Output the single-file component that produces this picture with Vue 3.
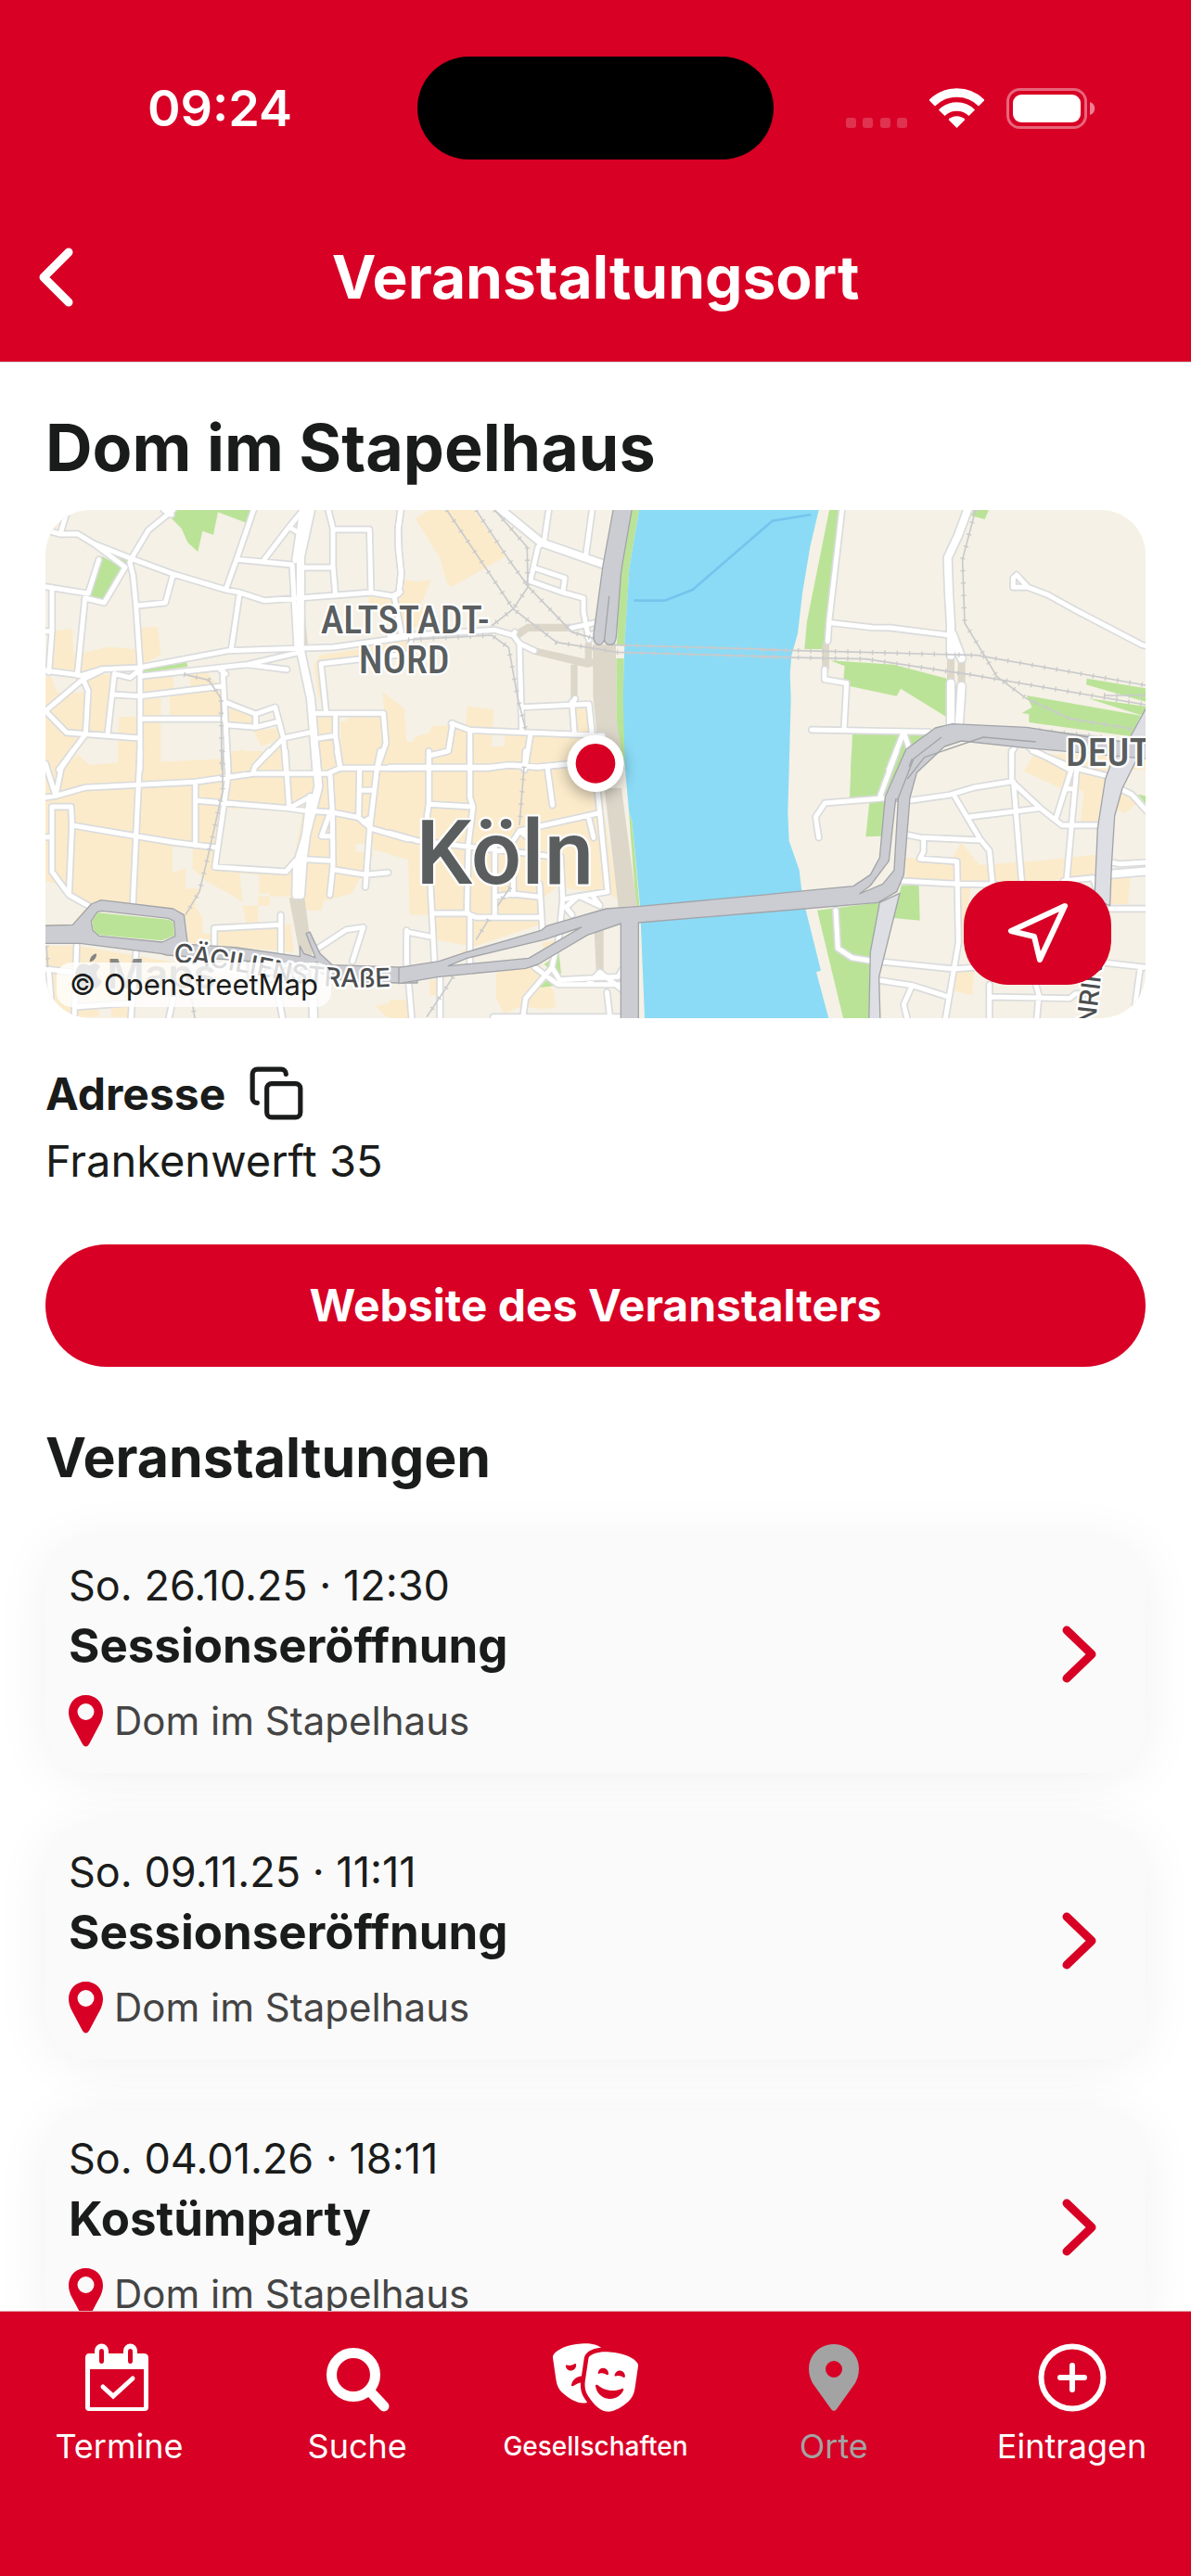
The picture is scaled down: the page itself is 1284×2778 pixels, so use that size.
<script setup>
import { ref } from 'vue'

const events = ref([
  { id: 1, date: 'So. 26.10.25 · 12:30', title: 'Sessionseröffnung', place: 'Dom im Stapelhaus' },
  { id: 2, date: 'So. 09.11.25 · 11:11', title: 'Sessionseröffnung', place: 'Dom im Stapelhaus' },
  { id: 3, date: 'So. 04.01.26 · 18:11', title: 'Kostümparty', place: 'Dom im Stapelhaus' },
])

// --- MAP DATA: six tiles, each with its own origin ---
const tiles = [
  {
    id: 'nw',
    origin: 'translate(-27 -30)',
    blocks:
      'M60 420 113 414 118 496 160 490 230 473 315 480 333 470 338 410 390 408 400 500 335 530 145 570 60 555 45 545z M45 570 60 620 155 620 150 570 245 560 235 755 150 750 75 870 27 870 27 690z M27 570H45L75 650 27 680z M265 700 400 695 400 870 260 870z M345 570 440 570 443 610 345 620z M345 640H400V700H345z M428 625 590 600 600 700 430 695z M495 560 550 555 585 600 495 610z M620 665 705 690 700 725 620 715z M700 745 780 735 790 770 725 795z M400 845 600 835 660 805 710 830 790 770 800 870 400 870z M125 825 170 855 260 850 260 870 80 870z M905 700H965V770L960 860 915 870z M980 715 1003 712V700H1110L1130 790 1100 860 985 860z M1118 618 1187 672 1195 780 1200 870 1110 870 1130 790z M895 530 915 500 1040 480 1200 450V490L915 525 930 680 910 630z M1072 310H1200V400H1165L1150 360 1075 345z M27 60 75 50 60 95 40 90z',
    greens:
      'M428 50 455 30H690L678 72 585 37 570 110 535 98 520 165 487 135 467 90z M210 180 275 215 215 320 170 308z M345 545 483 520 487 537 345 555z M240 175 290 190 285 208z',
    tan: 'M838 200H852V470H840z M862 330 876 470H862z',
    roads:
      'M27 95 75 108 130 107 185 140 285 215 217 330 155 315M185 140 305 187 440 237 610 288 655 297 735 323 965 306 1080 297 1150 308 1175 295M98 30 75 108M200 190 165 300 27 278M440 30 360 95 305 187 300 200 310 240 320 340 333 530 333 870M410 30 435 45M440 237 415 330 320 340M700 30 645 190 610 288M655 297 628 480M645 190 825 207M735 190 815 85 860 30M815 85 840 100M825 207 840 480M942 30 957 90 957 210 965 306M957 93H1075L1080 297M860 216H957M1175 30 1168 90 1168 150 1177 235 1170 300M48 280 48 420 38 555M27 422H48M155 315 130 565M27 550 145 565 210 545 330 540 620 485 840 478 960 474 1200 440M27 680 145 580 210 548M27 680 95 750 330 768M150 580 165 615 157 755 70 870M250 560 228 755M250 560 300 572 335 545M333 568 680 530 850 490M680 530 808 546M245 627 333 632 600 600M333 706H605M600 540 605 640 618 870M585 540 610 560M612 653 707 690 770 668 797 770 805 870M707 690V730M612 725 707 733 778 715M880 750 797 768 705 860M1200 495 918 527 935 688 1120 688 1128 785 1100 865M905 688H935M965 688 965 760 980 860M912 768 965 760',
    wideRoads: 'M885 30 852 180 851 480 885 640 905 880M862 30 838 190',
    rails: 'M475 562 555 580 595 640 597 870',
  },
  {
    id: 'sw',
    origin: 'translate(-27 780)',
    blocks:
      'M27 60H100L130 10 170 45 260 38V60H400V35H600V0H790L805 60H905V0H1200V345L1090 320 1085 300H1030V325L1090 330 1040 420 1020 460 925 485 920 515 870 515 820 520V470H718V400L655 395 665 490 620 460 545 420 503 380V310H438V392L480 380V445H525L510 500 535 540V590H570V560L675 555 665 500 752 500V460H715V560H820L830 650 490 620 480 540 430 510 200 485 110 560 27 565V450L60 430 27 420z M27 630H130L310 660 480 690 500 740 470 790 320 800 300 860 240 860V820H200V860H27z M1095 825 1180 805H1200V860H1130z',
    land: 'M610 185 860 195 830 350 800 390 580 370z M27 455 60 425 103 465 165 500 110 560 27 560z M805 0H880V60L810 65z',
    greens: '',
    tan: 'M815 475H865L890 660 850 660z',
    roads:
      'M27 150 60 145 155 118 510 100 700 73H940L980 55H1200M27 40 60 145 78 55 115 0M333 0 310 490M103 465 48 390V180H110L113 240 103 465 165 500M27 278H48M113 240 320 275 440 295 580 312M512 105V305M512 160 815 185M612 0 618 80 575 375 805 390 835 355M750 0 705 50 697 73M803 0 815 185 880 150M815 185 860 192 955 198 1040 215 1080 250 1200 285M970 0 980 55M1110 0 1100 50 1075 260 1062 440M1043 60 1040 215M1045 127H1090M1055 230 1080 215M948 80 955 200 957 370 947 465M945 205 920 275H955M865 350 955 355M957 383 1062 400 1135 393M573 640V573L788 562M788 530V660M905 640 1000 578 1055 570 1020 680M27 705 110 715M37 705 50 870M128 630 120 870M320 650 303 870M120 828 303 815M1195 580V700M440 800 425 870M780 790 795 870',
    wideRoads: 'M900 0 910 115 865 290 840 370 838 465M885 150 860 350 852 465M892 800 894 870',
    rails: 'M600 0 600 130 555 330 525 455 480 530M30 630 35 700M500 800 510 864',
  },
  {
    id: 'n',
    origin: 'translate(1113 -30)',
    blocks:
      'M83 58 130 30H272L375 180 200 280 185 265 163 185z M48 255 90 262 135 255 100 340 150 375 20 440z M0 640 48 680 52 780 75 780 80 765 130 750 135 730 205 725 245 735 252 665 337 675 330 795 370 795 375 750 600 765 700 780V870H0z M605 670 640 675 650 750 605 750z',
    greens: 'M780 30H807L775 220 760 465H735L745 240z M733 510H758V640L765 870 740 780 733 710z',
    tan: 'M658 465H732V700L760 870H690L670 750 658 630z M398 445 400 425 445 398H590V423H450L420 445z M470 475 640 513 658 510V535L640 540 465 497z M586 530H608V650H586z M632 460H654V520H632z',
    roads:
      'M37 30 28 90 30 160 38 235 30 300 15 310 40 440M0 440 340 418 400 435 405 425M400 435 420 462 468 485M70 435 65 480M515 30 500 130 480 150 455 260 560 297 567 250 470 218M560 297 627 315 627 360 645 450M655 30 635 175M585 412 665 395M640 440 660 430M420 460 428 750M0 862H320L400 855 480 862 600 850M428 668 645 658 655 755M590 650 598 755M600 640 590 660M200 720 260 742 690 760M205 720 190 810 127 825V870M260 742V870M455 760 437 870',
    wideRoads: 'M350 20 490 135 690 205',
    rails:
      'M185 30 400 350 540 458 735 490 1260 505M280 30 385 190 450 280 590 425 735 467 1260 482M340 30 445 150 447 280 400 350 330 405M60 450 330 435 385 475 415 640 440 740',
  },
  {
    id: 's',
    origin: 'translate(1113 780)',
    blocks:
      'M0 0H660L740 480 725 470 700 455 555 470 540 340V440L550 470 480 480 490 560 250 640 140 650 130 530H65L60 350 0 335z M345 700 490 690 500 740 530 775 537 830 490 835 430 825 370 850 345 800z M155 640 250 600V650L160 675z M495 620 550 610 540 655 500 680z M0 805H60V864H0z M130 740H160V790H130z',
    land: 'M150 610 255 630 190 690 145 670z M540 440 700 460 735 480 740 520 500 560 490 480z',
    greens:
      'M760 0 775 200 785 230 808 500H797L780 280z M500 690 548 655 555 720 535 720z M485 765 510 740 530 760z',
    tan: 'M695 120H750L800 500 740 505z M662 580H692V710H668z',
    roads:
      'M0 55H320L380 45 475 52 600 40M127 0V170L120 220M260 0V150L270 180 255 300 250 520 260 530V690M127 172 270 180M440 0 437 40M510 50 527 175M0 265 90 290 260 310 440 330 550 345M400 290 420 258 680 200M420 258 460 290M672 120 705 455 610 470 560 480M643 210 660 280M553 340 560 480 548 600 525 700 440 800 430 870M132 430 145 680M340 310V530M345 470 400 462 485 472M400 400V465M485 430 495 590M140 525H250L280 538H490M130 600 55 585V690M610 470 570 505 590 530M655 465 680 500M615 470 680 500M62 750 72 870M163 730V870M470 700 545 755H750M525 700 550 740 740 730 750 710M640 755 680 715 750 770M703 780 712 855M335 860H745',
    wideRoads: '',
    rails: 'M435 50 420 240M390 440 350 500M320 545 280 610M205 730 180 770 120 860',
  },
  {
    id: 'ne',
    origin: 'translate(2313 -30)',
    blocks: 'M885 820H1245V870H855z',
    greens:
      'M222 30H250L225 380 203 480H142L150 390z M225 517 430 530 602 575V700L453 608 440 632 288 600 268 580 272 535z M628 600H640V700H628z M297 755H540L440 870H292z M690 30H738L725 60 680 48z M1055 575 1245 607V650L1053 595z M1060 640 1245 665V692L1225 692z M860 630 1230 695 1195 762 868 717V690L845 687 878 668z',
    tan: 'M200 460H222V545H198z M603 510H627V585H603z M638 515H662V600H638z',
    roads:
      'M263 30 222 385 217 455M230 395 360 410 420 411 610 435M207 545V578L278 590 270 738M165 741 545 748M460 755 415 870M465 755 480 800M1250 470 1235 467 1020 355 930 305 865 280H817V250L828 240 865 280M812 870V815L820 800M870 800 1000 870',
    wideRoads: 'M673 20 640 110 605 185 609 300 615 400 615 500M620 430 650 510M615 590V720M650 600 642 720',
    rails:
      'M0 482 250 488 700 500 1245 597M0 505 340 512 680 563 1245 660M695 30 653 190 660 395 765 570 860 640 1000 705 1200 738M1110 630H1245M900 742 1150 770',
  },
  {
    id: 'se',
    origin: 'translate(2313 780)',
    blocks:
      'M885 10 1000 60 970 120 852 65z M1000 10 1120 60 1090 230H1035L1045 130 970 120z M1170 130 1215 170 1180 200 1150 190z M470 345 620 350 648 295 708 368 900 355 1085 335 1080 400 980 415 740 425 470 415z M1135 410H1195L1188 495H1130z M635 715 690 710 685 790 622 775z M640 430H680L660 620 640 640z',
    greens:
      'M294 0H470L400 148 288 152z M352 165 403 165 392 275 340 277z M183 515 385 490 355 650V864H267z M455 435 512 432 515 548 430 540z M1220 140 1245 145V170z',
    tan: '',
    roads:
      'M440 0 385 150M403 152 208 168 178 213 188 280M483 160 610 142 690 118 812 98V0M625 142 710 285 740 322 750 430M470 270 520 280 710 288M527 282 527 325 515 348 635 357 640 620 597 870M455 420 640 430 760 432M675 213 900 185M812 98 905 185 975 240H1090M818 100 845 430M1005 60 955 218M1022 60 990 415M990 122H1015M880 0 1000 50 1120 80M980 420 1075 410 1085 440M1170 125 1200 140 1250 195M1135 360 1160 365 1250 360M1130 510H1250M243 515 250 638 295 668 355 678M397 682 625 705 690 700M385 742 490 758 600 793M490 758 463 820 475 870M740 755V870M745 795 1000 800 1018 785H1045M890 755 900 790 893 870M1115 685 1250 700M1228 700 1210 830',
    wideRoads: 'M1130 398 1250 388',
    rails: '',
  },
]
</script>

<template>
  <div class="screen">
    <header class="top">
      <div class="status-bar">
        <time class="clock">09:24</time>
        <div class="island"></div>
        <div class="status-icons">
          <svg width="66" height="44" viewBox="0 0 66 44" fill="#fff" fill-opacity="0.2">
            <rect x="0" y="32" width="11" height="11" rx="3" />
            <rect x="18" y="32" width="11" height="11" rx="3" />
            <rect x="37" y="32" width="11" height="11" rx="3" />
            <rect x="55" y="32" width="11" height="11" rx="3" />
          </svg>
          <svg width="59" height="44" viewBox="0 0 176 132" fill="none" stroke="#fff" stroke-width="28">
            <path d="M7.400 48.400a114 114 0 0 1 161.200 0M39.200 80.200a69 69 0 0 1 97.600 0" />
            <path d="M88 129 61.100 102.100a38 38 0 0 1 53.800 0z" fill="#fff" stroke="none" />
          </svg>
          <svg width="96" height="44" viewBox="0 0 96 44">
            <rect x="1.500" y="1.500" width="84" height="41" rx="13" fill="none" stroke="#fff" stroke-opacity="0.4" stroke-width="3" />
            <rect x="7" y="7" width="73" height="30" rx="9" fill="#fff" />
            <path d="M90 15c7 2 7 12 0 14z" fill="#fff" fill-opacity="0.5" />
          </svg>
        </div>
      </div>
      <div class="title-bar">
        <button class="back" type="button" aria-label="Zurück">
          <svg width="38" height="64" viewBox="0 0 38 64">
            <path d="M33 5 6 32l27 27" />
          </svg>
        </button>
        <span class="page-title">Veranstaltungsort</span>
      </div>
    </header>

    <main class="content">
      <h1>Dom im Stapelhaus</h1>

      <div class="map">
        <svg class="map-canvas" viewBox="0 0 3558 1644">
          <rect width="3558" height="1644" fill="#f5f1e6" />
          <g v-for="t in tiles" :key="'area-' + t.id" :transform="t.origin">
            <path :d="t.blocks" fill="#fbebcb" />
            <path v-if="t.land" :d="t.land" fill="#f5f1e6" />
            <path :d="t.greens" fill="#bae398" />
            <path :d="t.tan" fill="#ddd7ca" />
          </g>

          <!-- Rhein -->
          <g transform="translate(1113 780)">
            <path
              fill="#8bdbf6"
              d="M807-780 775-590 760-345 755-170 762 60 775 200 785 230 810 500 825 864H1420L1380 715 1395 710 1335 470 1325 385 1292 290 1288 200 1292 60 1298-170 1295-250 1300-310 1320-380 1335-510 1360-660 1388-780z"
            />
            <path
              class="ferry"
              d="M790-487H890L980-522 1238-745 1363-765"
            />
          </g>

          <g v-for="t in tiles" :key="'case-' + t.id" :transform="t.origin" class="casing">
            <path :d="t.roads" />
            <path :d="t.wideRoads" class="wide" />
          </g>
          <g v-for="t in tiles" :key="'road-' + t.id" :transform="t.origin" class="road">
            <path :d="t.roads" />
            <path :d="t.wideRoads" class="wide" />
          </g>
          <g v-for="t in tiles" :key="'rail-' + t.id" :transform="t.origin" class="rail">
            <path :d="t.rails" />
            <path :d="t.rails" class="ties" />
          </g>

          <!-- Bundesstraßen -->
          <g class="highway">
            <path
              transform="translate(2313 780)"
              class="light"
              d="M1250-145 1195-45 1130 50 1115 90 1090 250 1080 480 1130 500 1135 370 1145 210 1170 120 1220 20 1250-30z M385 490 355 650 350 880H387L383 730 450 460z"
            />
            <path
              transform="translate(-27 780)"
              d="M20 565 115 562 175 495 207 482 440 510 475 530 487 625 640 635 850 665 850 630 862 655 900 668 870 590 882 585 915 655 955 692 1200 700 1230 698V750H1170L1000 745 830 690 420 660 400 655 140 622 20 622z M175 550 195 520 210 517 425 541 443 550 447 598 405 618 200 598 180 580z"
            />
            <path
              transform="translate(1113 780)"
              d="M30 700 160 680 250 650 490 580 510 565 700 510 810 502 1200 466 1380 448 1500 437 1555 400 1585 345 1603 148 1670-5 1765-75 1820-88 2060-77 2265-45 2450-20V25L2200 2 2060-10 1850-33 1795-15 1705 70 1683 150 1663 400 1640 455 1580 490 1200 522 805 555V880H748V558L640 595 480 690 440 703 160 730 30 752z M190 695 250 670 500 610 620 570 450 670z M1520 462 1555 435 1615 355 1637 155 1645 155 1632 385 1595 430z"
            />
            <path
              transform="translate(2313 -30)"
              class="edge"
              d="M440 975 495 835 585 765M475 900 530 830 720 765 890 780M490 835 480 860"
            />
            <path
              transform="translate(1113 -30)"
              d="M725 20H785L752 210 748 240 733 440Q731 466 713 466 697 466 695 448 690 466 676 466 658 464 660 430L690 210z M710 310 695 448z"
            />
          </g>
          <path transform="translate(-27 780)" fill="#bae398" d="M178 550 197 523 425 545 440 553 444 596 403 613 200 595 182 578z" />

          <g class="map-text">
            <text x="1163" y="400" font-size="126" text-anchor="middle">ALTSTADT-</text>
            <text x="1160" y="528" font-size="126" text-anchor="middle">NORD</text>
            <text class="city" x="1198" y="1210" font-size="288">Köln</text>
            <text x="3300" y="827" font-size="126">DEUTZ</text>
          </g>
          <g class="street-text">
            <path id="caecilien" d="M412 1460Q600 1486 760 1520T1160 1540" fill="none" stroke="none" />
            <text><textPath href="#caecilien">CÄCILIENSTRAßE</textPath></text>
            <text transform="translate(3394 1672) rotate(-83)">NRING</text>
          </g>

          <g transform="translate(-27 780)" fill="#777a7a" fill-opacity="0.9">
            <path
              d="M170 682C170 668 180 657 192 655 193 670 184 680 170 682zM204 700C187 710 189 736 210 744 204 757 197 767 188 767 180 767 178 763 168 763 158 763 155 767 148 767 135 767 124 742 124 722 124 700 137 688 150 688 158 688 164 693 169 693 174 693 180 687 190 687 196 688 201 692 204 700z"
            />
            <text x="226" y="767" font-size="132" font-weight="600">Maps</text>
            <text x="668" y="752" font-size="96" font-weight="500" fill-opacity="0.4">Legal</text>
          </g>

          <g class="marker">
            <circle cx="1779" cy="820" r="92" fill="#fff" />
            <circle cx="1779" cy="820" r="64" fill="#d80025" />
          </g>
        </svg>

        <a class="attribution" href="#osm">© OpenStreetMap</a>
        <button class="navigate" type="button" aria-label="Route starten">
          <svg width="66" height="66" viewBox="0 0 66 66">
            <path d="M62 4 4 31l25 6 6 25z" />
          </svg>
        </button>
      </div>

      <section>
        <div class="address-head">
          <h3>Adresse</h3>
          <button class="copy" type="button" aria-label="Adresse kopieren">
            <svg width="62" height="62" viewBox="0 0 24 24">
              <rect x="8" y="8" width="14" height="14" rx="2" />
              <path d="M4 16c-1.100 0-2-.9-2-2V4c0-1.100.9-2 2-2h10c1.100 0 2 .9 2 2" />
            </svg>
          </button>
        </div>
        <p class="address">Frankenwerft 35</p>
        <a class="website" href="#website">Website des Veranstalters</a>
      </section>

      <section>
        <h2>Veranstaltungen</h2>
        <div class="event-list">
          <a v-for="event in events" :key="event.id" class="event-card" href="#event">
            <div>
              <p class="event-date">{{ event.date }}</p>
              <h3 class="event-title">{{ event.title }}</h3>
              <p class="event-place">
                <svg width="37" height="56" viewBox="0 0 37 56">
                  <path
                    fill="#d80025"
                    fill-rule="evenodd"
                    d="M18.500 0C8 0 0 8 0 18.500c0 4 1 7 2.500 11L15 53q3.500 5 7 0l12.500-23.500C36 25.500 37 22.500 37 18.500 37 8 29 0 18.500 0zm0 9a9 9 0 1 1 0 18 9 9 0 0 1 0-18z"
                  />
                </svg>
                <span>{{ event.place }}</span>
              </p>
            </div>
            <svg class="event-arrow" width="37" height="62" viewBox="0 0 37 62">
              <path d="M5 5 32 31 5 57" />
            </svg>
          </a>
        </div>
      </section>
    </main>

    <nav class="tabs">
      <a class="tab" href="#termine">
        <svg width="74" height="74" viewBox="0 0 74 74">
          <path
            fill="#fff"
            fill-rule="evenodd"
            d="M5 11h6V8a7.500 7.500 0 0 1 15 0v3h16V8a7.500 7.500 0 0 1 15 0v3h7q5 0 5 5v53q0 4-4 4H5q-4 0-4-4V16q0-5 4-5zM6 28v41h58V28zM18.500 6Q16 6 16 9v10q0 3 2.500 3t2.500-3V9q0-3-2.500-3zm31 0Q47 6 47 9v10q0 3 2.500 3t2.500-3V9q0-3-2.500-3z"
          />
          <path d="m20 47 11 10 21-19" fill="none" stroke="#fff" stroke-width="5" stroke-linecap="round" />
        </svg>
        <span>Termine</span>
      </a>
      <a class="tab" href="#suche">
        <svg width="74" height="74" viewBox="0 0 74 74" fill="none" stroke="#fff">
          <circle cx="33" cy="34" r="23.500" stroke-width="11" />
          <path d="m51 52 15 16" stroke-width="11" stroke-linecap="round" />
        </svg>
        <span>Suche</span>
      </a>
      <a class="tab" href="#gesellschaften">
        <svg width="92" height="74" viewBox="0 0 640 512" fill="#fff">
          <path
            d="M74.600 373.200c41.700 36.100 108 82.500 166.100 73.700c6.100-.9 12.100-2.500 18-4.500c-9.200-12.300-17.300-24.400-24.200-35.400c-21.900-35-28.800-75.200-25.900-113.600c-20.600 4.100-39.200 13-54.700 25.400c-6.500 5.200-16.300 1.300-14.800-7c6.400-33.500 33-60.900 68.200-66.300c2.600-.4 5.300-.7 7.900-.8l19.400-131.300c2-13.800 8-32.700 25-45.900C278.200 53.200 310.500 37 363.200 32.200c-.8-.7-1.600-1.400-2.400-2.100C340.600 14.500 288.400-11.500 175.700 5.600S20.500 63 5.700 83.900C0 91.900-.8 102 .6 111.800L24.800 276.100c5.500 37.300 21.500 72.600 49.800 97.200zm87.700-219.600c4.400-3.100 10.800-2 11.800 3.300c.1 .5 .2 1.100 .3 1.600c3.200 21.800-11.600 42-33.100 45.300s-41.500-11.800-44.700-33.500c-.1-.5-.1-1.100-.2-1.600c-.6-5.400 5.200-8.400 10.300-6.700c9 3 18.800 3.900 28.700 2.400s19.100-5.300 26.800-10.800zM261.600 390c29.400 46.900 79.500 110.900 137.600 119.700s124.500-37.500 166.100-73.700c28.300-24.500 44.300-59.800 49.800-97.200l24.200-164.300c1.400-9.800 .6-19.900-5.100-27.900c-14.800-20.900-57.300-61.200-170-78.300S299.400 77.200 279.200 92.800c-7.800 6-11.500 15.400-12.900 25.200L242.100 282.300c-5.500 37.300-.4 75.800 19.600 107.700zM404.500 235.300c-7.700-5.500-16.800-9.300-26.800-10.800s-19.800-.6-28.700 2.400c-5.100 1.700-10.900-1.300-10.300-6.700c.1-.5 .1-1.100 .2-1.600c3.200-21.800 23.200-36.800 44.700-33.500s36.300 23.500 33.100 45.300c-.1 .5-.2 1.100-.3 1.600c-1 5.300-7.400 6.400-11.800 3.300zm136.200 15.500c-1 5.300-7.400 6.400-11.800 3.300c-7.700-5.500-16.800-9.300-26.800-10.800s-19.800-.6-28.700 2.400c-5.100 1.700-10.900-1.300-10.300-6.700c.1-.5 .1-1.100 .2-1.600c3.200-21.800 23.200-36.800 44.700-33.500s36.300 23.500 33.100 45.300c-.1 .5-.2 1.100-.3 1.600zM530 350.200c-19.600 44.700-66.800 72.500-116.800 64.900s-87.100-48.200-93-96.700c-1-8.300 8.900-12.100 15.200-6.700c23.900 20.800 53.600 35.300 87 40.300s66.100 .1 94.900-12.800c7.600-3.400 16 3.200 12.600 10.900z"
          />
        </svg>
        <span class="small">Gesellschaften</span>
      </a>
      <a class="tab active" href="#orte" aria-current="page">
        <svg width="74" height="74" viewBox="0 0 74 74">
          <path
            fill="#a3a3a3"
            fill-rule="evenodd"
            d="M37 1C22 1 10 12.500 10 27.500 10 34 12 39 14 43L34 71q3 4 6 0l20-28c2-4 4-9 4-15.500C64 12.500 52 1 37 1zm0 18a9 9 0 1 1 0 18 9 9 0 0 1 0-18z"
          />
        </svg>
        <span>Orte</span>
      </a>
      <a class="tab" href="#eintragen">
        <svg width="74" height="74" viewBox="0 0 74 74" fill="none" stroke="#fff" stroke-width="6">
          <circle cx="37" cy="37" r="33.500" />
          <path d="M37 24v26M24 37h26" stroke-linecap="round" />
        </svg>
        <span>Eintragen</span>
      </a>
    </nav>
  </div>
</template>

<style>
body {
  margin: 0;
  background: #fff;
}
</style>

<style scoped>
.screen {
  display: flex;
  flex-direction: column;
  height: 100vh;
  overflow: hidden;
  font-family: Inter, 'Liberation Sans', sans-serif;
  color: #1a1c1b;
}

h1,
h2,
h3,
p {
  margin: 0;
}

a {
  color: inherit;
  text-decoration: none;
}

button {
  padding: 0;
  border: none;
  background: none;
  cursor: pointer;
}

svg {
  display: block;
  flex: none;
}

/* --- HEADER --- */
.top {
  background: #d80025;
  color: #fff;
  border-bottom: 1px solid #d5d9dd;
}

.status-bar {
  display: grid;
  grid-template-columns: 1fr 384px 1fr;
  align-items: center;
  padding: 61px 0 35px;
}

.clock {
  justify-self: center;
  padding-left: 24px;
  font-size: 54px;
  font-weight: 600;
}

.island {
  height: 111px;
  border-radius: 56px;
  background: #000;
}

.status-icons {
  display: flex;
  gap: 24px;
  padding-left: 78px;
}

.title-bar {
  display: grid;
  grid-template-columns: 120px 1fr 120px;
  align-items: center;
  height: 183px;
}

.back {
  padding-left: 41px;
}

.back path,
.event-arrow path {
  fill: none;
  stroke: #fff;
  stroke-width: 9;
  stroke-linecap: round;
  stroke-linejoin: round;
}

.page-title {
  text-align: center;
  font-size: 64px;
  font-weight: 700;
}

/* --- CONTENT --- */
.content {
  flex: 1;
  min-height: 0;
  overflow-y: auto;
  scrollbar-width: none;
  padding: 47px 49px 0;
}

h1 {
  margin-bottom: 22px;
  font-size: 70px;
  line-height: 90px;
  font-weight: 700;
}

.map {
  position: relative;
  overflow: hidden;
  border-radius: 48px;
}

.map-canvas {
  width: 100%;
  height: auto;
}

.ferry {
  fill: none;
  stroke: #74c4ee;
  stroke-width: 8;
}

.casing path,
.road path {
  fill: none;
  stroke-linecap: round;
  stroke-linejoin: round;
}

.casing path {
  stroke: #dadbdc;
  stroke-width: 25;
}

.casing .wide {
  stroke-width: 34;
}

.road path {
  stroke: #fff;
  stroke-width: 15;
}

.road .wide {
  stroke-width: 24;
}

.rail path {
  fill: none;
  stroke: #c9cacb;
  stroke-width: 5;
}

.rail .ties {
  stroke-width: 16;
  stroke-dasharray: 4 36;
}

.highway path {
  fill: #cccdd2;
  fill-rule: evenodd;
  stroke: #a2a4a8;
  stroke-width: 4;
  stroke-linejoin: round;
}

.highway .light {
  fill: #dedfe4;
}

.highway .edge {
  fill: none;
}

.map-text text {
  font-family: 'Roboto Condensed', 'Liberation Sans Narrow', Roboto, sans-serif;
  font-weight: 500;
  fill: #5a5e5f;
  stroke: #fff;
  stroke-width: 14;
  stroke-linejoin: round;
  paint-order: stroke;
}

.map-text .city {
  font-family: Roboto, sans-serif;
}

.street-text text {
  font-size: 84px;
  font-weight: 500;
  fill: #4b4e4f;
  stroke: #fff;
  stroke-width: 14;
  stroke-linejoin: round;
  paint-order: stroke;
}

.marker {
  filter: drop-shadow(0 12px 24px rgba(0, 0, 0, 0.35));
}

.attribution {
  position: absolute;
  left: 12px;
  bottom: 12px;
  padding: 0 14px;
  border-radius: 16px;
  background: rgba(255, 255, 255, 0.8);
  font-size: 31px;
  line-height: 48px;
}

.navigate {
  position: absolute;
  right: 37px;
  bottom: 36px;
  display: flex;
  align-items: center;
  justify-content: center;
  width: 159px;
  height: 112px;
  border-radius: 48px;
  background: #d80025;
}

.navigate path {
  fill: none;
  stroke: #fff;
  stroke-width: 6;
  stroke-linejoin: round;
}

.address-head {
  display: flex;
  align-items: center;
  gap: 24px;
  margin-top: 50px;
}

.address-head h3 {
  font-size: 48px;
  font-weight: 700;
}

.copy svg {
  fill: none;
  stroke: #1a1c1b;
  stroke-width: 2;
  stroke-linecap: round;
  stroke-linejoin: round;
}

.address {
  margin-top: 12px;
  font-size: 47px;
  line-height: 60px;
}

.website {
  display: block;
  margin-top: 60px;
  border-radius: 66px;
  background: #d80025;
  color: #fff;
  font-size: 48px;
  line-height: 132px;
  font-weight: 700;
  text-align: center;
}

h2 {
  margin: 62px 0 49px;
  font-size: 59px;
  line-height: 72px;
  font-weight: 700;
}

/* --- EVENTS --- */
.event-list {
  display: flex;
  flex-direction: column;
  gap: 54px;
}

.event-card {
  display: flex;
  align-items: center;
  justify-content: space-between;
  padding: 26px 53px 28px 25px;
  border-radius: 48px;
  background: #fafafa;
  box-shadow: 0 6px 60px rgba(0, 0, 0, 0.06);
}

.event-date {
  font-size: 45px;
  line-height: 54px;
}

.event-title {
  margin: 6px 0 21px;
  font-size: 51px;
  line-height: 64px;
  font-weight: 700;
}

.event-place {
  display: flex;
  align-items: center;
  gap: 12px;
  font-size: 42px;
  line-height: 56px;
  color: #444;
}

.event-arrow path {
  stroke: #d80025;
}

/* --- TAB BAR --- */
.tabs {
  display: flex;
  padding: 34px 0 118px;
  border-top: 1px solid #e3a5ae;
  background: #d80025;
  color: #fff;
}

.tab {
  flex: 1 1 0;
  min-width: 0;
  display: flex;
  flex-direction: column;
  align-items: center;
  gap: 15px;
  font-size: 36px;
  line-height: 44px;
}

.tab .small {
  font-size: 28px;
  font-weight: 500;
}

.tab.active {
  color: #a3a3a3;
}
</style>
